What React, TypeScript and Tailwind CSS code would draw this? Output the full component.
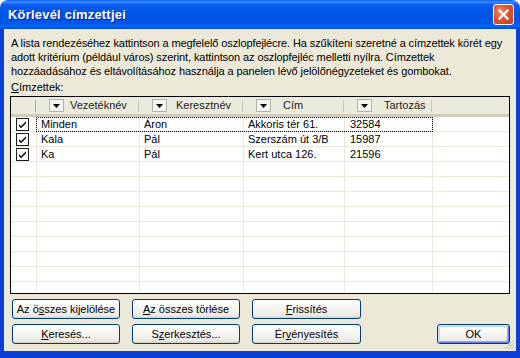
import React from "react";

type Row = { last: string; first: string; addr: string; due: string };

const ROWS: Row[] = [
  { last: "Minden", first: "Áron", addr: "Akkoris tér 61.", due: "32584" },
  { last: "Kala", first: "Pál", addr: "Szerszám út 3/B", due: "15987" },
  { last: "Ka", first: "Pál", addr: "Kert utca 126.", due: "21596" },
];

// header label offsets (px from the sort button)
const HEADERS: { label: string; gap: string }[] = [
  { label: "Vezetéknév", gap: "ml-[6px]" },
  { label: "Keresztnév", gap: "ml-[9px]" },
  { label: "Cím", gap: "ml-[12px]" },
  { label: "Tartozás", gap: "ml-[12px]" },
];

const GRID = "grid grid-cols-[26px_103px_104px_101px_88px_1fr]";

function CheckBox() {
  return (
    <svg width="13" height="13" viewBox="0 0 13 13" className="block">
      <rect x="0.5" y="0.5" width="12" height="12" fill="#fff" stroke="#1c1c1c" />
      <path d="M3 6 L5 8.2 L10 3.2 L10 5.2 L5 10.2 L3 8 Z" fill="#000" />
    </svg>
  );
}

function SortButton() {
  return (
    <div className="w-[15px] h-[13px] border border-[#b5b3a8] bg-[#f5f4ef] flex items-center justify-center shrink-0">
      <svg width="7" height="4" viewBox="0 0 7 4">
        <path d="M0 0 H7 L3.5 4 Z" fill="#000" />
      </svg>
    </div>
  );
}

function XPButton({
  children,
  width = "w-[108px]",
  className = "",
}: {
  children: React.ReactNode;
  width?: string;
  className?: string;
}) {
  return (
    <button
      className={
        width +
        " h-[20px] rounded-[3px] border border-[#003c74] bg-[linear-gradient(180deg,#ffffff_0%,#f5f5f1_45%,#ecebe6_85%,#d8d2c6_100%)] text-[11px] leading-none text-black flex items-center justify-center " +
        className
      }
    >
      {children}
    </button>
  );
}

const U = ({ children }: { children: React.ReactNode }) => (
  <span className="underline underline-offset-[1px]">{children}</span>
);

export default function App() {
  const empty = Array.from({ length: 10 });

  return (
    <div className="w-[520px] h-[358px] bg-white font-['Liberation_Sans',Arial,sans-serif]">
      <div className="flex flex-col h-full rounded-t-[8px] overflow-hidden">
        {/* Title bar */}
        <div className="h-[29px] shrink-0 flex items-center justify-between pl-[8px] pr-[6px] bg-[linear-gradient(180deg,#0a5ef0_0%,#3b8dff_7%,#0a5cf4_16%,#0054e3_45%,#0056e8_80%,#0466f8_90%,#0049d6_100%)]">
          <span className="text-white font-bold text-[13px] tracking-[0.2px] [text-shadow:1px_1px_0_#0a1a8c]">
            Körlevél címzettjei
          </span>
          <div className="w-[21px] h-[21px] rounded-[3px] border border-white bg-[radial-gradient(circle_at_35%_35%,#f08a6a_0%,#e0532f_45%,#c23a1c_100%)] flex items-center justify-center">
            <svg width="11" height="11" viewBox="0 0 11 11">
              <path
                d="M1.5 1.5 L9.5 9.5 M9.5 1.5 L1.5 9.5"
                stroke="#fff"
                strokeWidth="2.2"
                strokeLinecap="square"
              />
            </svg>
          </div>
        </div>

        {/* Body */}
        <div className="relative flex-1 flex flex-col bg-[#ece9d8] border-x-4 border-b-[7px] border-[#0a3fd8] px-[6px] pt-[7px] text-[11px] text-black">
          <p className="leading-[14px] pl-[1px] whitespace-nowrap tracking-[-0.1px]">
            A lista rendezéséhez kattintson a megfelelő oszlopfejlécre. Ha szűkíteni szeretné a címzettek körét egy
            <br />
            adott kritérium (például város) szerint, kattintson az oszlopfejléc melletti nyílra. Címzettek
            <br />
            hozzáadásához és eltávolításához használja a panelen lévő jelölőnégyzeteket és gombokat.
          </p>
          <div className="leading-[14px] pl-[1px] mt-[2px]">
            <U>C</U>ímzettek:
          </div>

          {/* List */}
          <div className="mt-[2px] h-[198px] border border-black bg-white overflow-hidden">
            <div className={GRID + " h-[20px] bg-[#ebeadb] border-b-[3px] border-[#d0ccbc]"}>
              <div className="flex items-center justify-end">
                <div className="w-[1px] h-[12px] bg-[#aca899] mr-[1px]" />
              </div>
              {HEADERS.map((h) => (
                <div key={h.label} className="flex items-center pl-[12px]">
                  <SortButton />
                  <span className={h.gap + " text-[#222]"}>{h.label}</span>
                  <div className="ml-auto w-[1px] h-[12px] bg-[#c7c5b2] mr-[1px]" />
                </div>
              ))}
              <div />
            </div>

            {ROWS.map((r, i) => (
              <div key={i} className={GRID + " relative h-[15px] leading-[14px]"}>
                <div className="border-r border-b border-[#ebe8d8] flex items-center pl-[5px]">
                  <CheckBox />
                </div>
                <div className="border-r border-b border-[#ebe8d8] pl-[4px]">{r.last}</div>
                <div className="border-r border-b border-[#ebe8d8] pl-[4px]">{r.first}</div>
                <div className="border-r border-b border-[#ebe8d8] pl-[4px]">{r.addr}</div>
                <div className="border-r border-b border-[#ebe8d8] pl-[5px]">{r.due}</div>
                <div className="border-b border-[#ebe8d8]" />
                {i === 0 && (
                  <div className="absolute left-[25px] top-0 w-[397px] h-[15px] border border-dotted border-black" />
                )}
              </div>
            ))}
            {empty.map((_, i) => (
              <div key={"e" + i} className={GRID + " h-[15px]"}>
                <div className="border-r border-b border-[#ebe8d8]" />
                <div className="border-r border-b border-[#ebe8d8]" />
                <div className="border-r border-b border-[#ebe8d8]" />
                <div className="border-r border-b border-[#ebe8d8]" />
                <div className="border-r border-b border-[#ebe8d8]" />
                <div className="border-b border-[#ebe8d8]" />
              </div>
            ))}
          </div>

          {/* Buttons */}
          <div className="flex gap-[12px] mt-[5px] pl-[2px]">
            <XPButton>
              Az ö<U>s</U>szes kijelölése
            </XPButton>
            <XPButton>
              <U>A</U>z összes törlése
            </XPButton>
            <XPButton width="w-[109px]">
              <U>F</U>rissítés
            </XPButton>
          </div>
          <div className="flex gap-[12px] mt-[5px] pl-[2px]">
            <XPButton>
              <U>K</U>eresés...
            </XPButton>
            <XPButton>
              S<U>z</U>erkesztés...
            </XPButton>
            <XPButton width="w-[109px]">
              Ér<U>v</U>ényesítés
            </XPButton>
            <XPButton
              width="w-[73px]"
              className="ml-auto shadow-[inset_1px_1px_0_#cee7ff,inset_-1px_-1px_0_#6982ee,inset_2px_2px_0_#bcd4f6,inset_-2px_-2px_0_#89ade4]"
            >
              OK
            </XPButton>
          </div>

          {/* size grip */}
          <svg width="11" height="11" viewBox="0 0 11 11" className="absolute right-[1px] bottom-[1px]">
            <path d="M10 1 L1 10 M10 4 L4 10 M10 7 L7 10" stroke="#c4c0ae" strokeWidth="1" />
          </svg>
        </div>
      </div>
    </div>
  );
}
